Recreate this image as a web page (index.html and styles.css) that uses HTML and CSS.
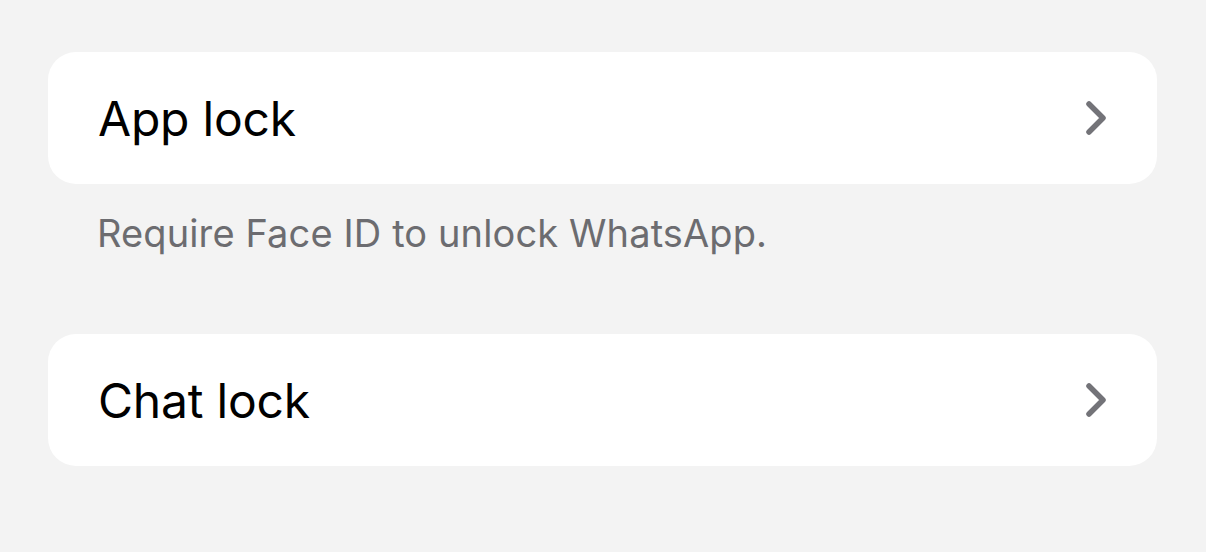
FILE: index.html
```html
<!DOCTYPE html>
<html>
<head>
<meta charset="utf-8">
<link rel="stylesheet" href="styles.css">
</head>
<body>
<div class="page">
  <section class="group">
    <div class="card">
      <span class="label">App lock</span>
      <svg class="chev" width="28" height="40" viewBox="0 0 28 40"><path d="M6 6 L20 20 L6 34" fill="none" stroke="#737378" stroke-width="5.5" stroke-linecap="round" stroke-linejoin="round"/></svg>
    </div>
    <p class="footer">Require Face ID to unlock WhatsApp.</p>
  </section>
  <section class="group">
    <div class="card">
      <span class="label">Chat lock</span>
      <svg class="chev" width="28" height="40" viewBox="0 0 28 40"><path d="M6 6 L20 20 L6 34" fill="none" stroke="#737378" stroke-width="5.5" stroke-linecap="round" stroke-linejoin="round"/></svg>
    </div>
  </section>
</div>
</body>
</html>
```
FILE: styles.css
```css
html, body {
  margin: 0;
  padding: 0;
  background: #f3f3f3;
}
.page {
  padding: 52px 49px 0 48px;
  font-family: Inter, "Noto Sans", sans-serif;
}
.card {
  background: #ffffff;
  border-radius: 28px;
  height: 132px;
  display: flex;
  align-items: center;
  justify-content: space-between;
  padding: 0 46px 0 50px;
  box-sizing: border-box;
}
.label {
  font-size: 48px;
  color: #000;
  letter-spacing: -0.2px;
}
.chev {
  display: block;
}
.footer {
  margin: 0;
  padding: 29px 0 0 49px;
  height: 150px;
  box-sizing: border-box;
  font-size: 38px;
  color: #6c6c70;
  line-height: 40px;
  letter-spacing: 0.12px;
}
```
